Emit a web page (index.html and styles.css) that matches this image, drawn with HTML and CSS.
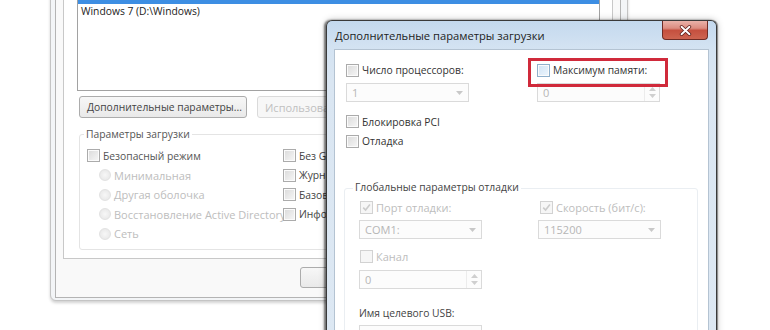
FILE: index.html
```html
<!DOCTYPE html>
<html lang="ru">
<head>
<meta charset="utf-8">
<title>Дополнительные параметры загрузки</title>
<link rel="stylesheet" href="styles.css">
</head>
<body>
<div class="desk">
  <div class="back">
    <div class="bclient">
      <div class="page">
        <div class="list">
          <div class="lrow sel"></div>
          <div class="lrow">Windows 7 (D:\Windows)</div>
        </div>
        <div class="btnrow">
          <button class="btn wide">Дополнительные параметры...</button>
          <button class="btn off">Использовать по умолчанию</button>
        </div>
        <div class="grp bgrp">
          <span class="gtitle">Параметры загрузки</span>
          <div class="bcols">
            <div class="bcol1">
              <div class="opt"><span class="cb"></span><span class="lt">Безопасный режим</span></div>
              <div class="opt sub dis"><span class="rb"></span><span>Минимальная</span></div>
              <div class="opt sub dis"><span class="rb"></span><span>Другая оболочка</span></div>
              <div class="opt sub dis"><span class="rb"></span><span>Восстановление Active Directory</span></div>
              <div class="opt sub dis"><span class="rb"></span><span>Сеть</span></div>
            </div>
            <div class="bcol2">
              <div class="opt"><span class="cb"></span><span class="dk">Без GUI</span></div>
              <div class="opt"><span class="cb"></span><span class="dk">Журнал загрузки</span></div>
              <div class="opt"><span class="cb"></span><span class="dk">Базовое видео</span></div>
              <div class="opt"><span class="cb"></span><span class="dk">Информация об ОС</span></div>
            </div>
          </div>
        </div>
      </div>
      <div class="foot">
        <button class="btn fb">OK</button>
        <button class="btn fb">Отмена</button>
        <button class="btn fb">Применить</button>
        <button class="btn fb">Справка</button>
      </div>
    </div>
  </div>

  <div class="dlg">
    <div class="tbar">
      <span class="ttext">Дополнительные параметры загрузки</span>
      <div class="close">
        <svg width="13" height="11" viewBox="0 0 13 11"><path d="M2.5 1.8 L10.5 9.2 M10.5 1.8 L2.5 9.2" stroke="#5a1d18" stroke-width="3.4" stroke-linecap="round"/><path d="M2.5 1.8 L10.5 9.2 M10.5 1.8 L2.5 9.2" stroke="#ffffff" stroke-width="1.9" stroke-linecap="round"/></svg>
      </div>
    </div>
    <div class="dclient">
      <div class="dtop">
        <div class="opt drow"><span class="cb"></span><span class="en">Число процессоров:</span></div>
        <div class="opt drow hl"><span class="cb hov"></span><span class="en">Максимум памяти:</span></div>
        <div class="fld">1<span class="arr"><svg width="7" height="4" viewBox="0 0 7 4"><path d="M0 0H7L3.5 4Z" fill="#c8c8c8"/></svg></span></div>
        <div class="fld">0<span class="spin"><svg width="7" height="4" viewBox="0 0 7 4"><path d="M0 4H7L3.5 0Z" fill="#cfcfcf"/></svg><svg width="7" height="4" viewBox="0 0 7 4"><path d="M0 0H7L3.5 4Z" fill="#cfcfcf"/></svg></span></div>
      </div>
      <div class="dchecks">
        <div class="opt drow"><span class="cb"></span><span class="en">Блокировка PCI</span></div>
        <div class="opt drow"><span class="cb"></span><span class="en">Отладка</span></div>
      </div>
      <div class="grp dgrp">
        <span class="gtitle dgt">Глобальные параметры отладки</span>
        <div class="ggrid">
          <div class="opt drow2 dis"><span class="cb off chk"><svg width="9" height="9" viewBox="0 0 9 9"><path d="M1.2 4.6 L3.6 7 L7.9 1.6" fill="none" stroke="#cbcbcb" stroke-width="1.6"/></svg></span><span>Порт отладки:</span></div>
          <div class="opt drow2 dis c2"><span class="cb off chk"><svg width="9" height="9" viewBox="0 0 9 9"><path d="M1.2 4.6 L3.6 7 L7.9 1.6" fill="none" stroke="#cbcbcb" stroke-width="1.6"/></svg></span><span>Скорость (бит/с):</span></div>
          <div class="fld f2">COM1:<span class="arr"><svg width="7" height="4" viewBox="0 0 7 4"><path d="M0 0H7L3.5 4Z" fill="#c8c8c8"/></svg></span></div>
          <div class="fld f2">115200<span class="arr"><svg width="7" height="4" viewBox="0 0 7 4"><path d="M0 0H7L3.5 4Z" fill="#c8c8c8"/></svg></span></div>
        </div>
        <div class="opt drow2 dis kanal"><span class="cb off"></span><span>Канал</span></div>
        <div class="fld f3">0<span class="spin"><svg width="7" height="4" viewBox="0 0 7 4"><path d="M0 4H7L3.5 0Z" fill="#cfcfcf"/></svg><svg width="7" height="4" viewBox="0 0 7 4"><path d="M0 0H7L3.5 4Z" fill="#cfcfcf"/></svg></span></div>
        <div class="usb">Имя целевого USB:</div>
        <div class="fld f4"></div>
      </div>
    </div>
  </div>
</div>
</body>
</html>
```

FILE: styles.css
```css
* { box-sizing: border-box; }
html, body { margin: 0; padding: 0; }
body {
  width: 770px; height: 330px; overflow: hidden; background: #fff;
  font-family: "Open Sans", "Noto Sans", "DejaVu Sans", sans-serif;
  font-size: 10.3px; color: #333;
}
.desk { position: relative; width: 770px; height: 330px; overflow: hidden; background: #fff; }

/* ---------- back window (msconfig) ---------- */
.back {
  position: absolute; left: 50px; top: -40px; width: 578px; height: 341px;
  border: 1px solid #c4c4c4; border-radius: 0 0 6px 6px;
  background: #f3f5f7; padding: 0 6px 2px 4px;
  box-shadow: 0 2px 3px rgba(0,0,0,.18);
  display: flex;
}
.bclient {
  flex: 1; border: 1px solid #b4b4b4; border-top: none; background: #f9f9f9;
  padding: 0 7px; display: flex; flex-direction: column;
}
.page {
  border: 1px solid #c8c8c8; border-top: none; background: #fff;
  padding: 26px 12px 8px 13px;
}
.list {
  height: 104px; border: 1px solid #a2a2a2; background: #fff; padding-top: 1px;
}
.lrow { height: 15px; line-height: 15px; padding-left: 3px; color: #222; white-space: nowrap; overflow: hidden; }
.lrow.sel { background: #3d8ee3; }

.btnrow { display: flex; gap: 10px; margin-top: 5px; padding-left: 2px; }
.btn {
  height: 22px; border: 1px solid #acacac; border-radius: 3px;
  background: linear-gradient(#f7f7f7, #e9e9e9);
  font: inherit; color: #444; padding: 0 7px; white-space: nowrap;
}
.btn.wide { width: 168px; }
.btn.off { border-color: #dadada; background: #f7f7f7; color: #c0c0c0; font-size: 11px; }

.grp { border: 1px solid #e4e4e4; border-radius: 3px; }
.gtitle {
  display: block; width: fit-content; background: #fff; padding: 0 2px;
  line-height: 15px; color: #555;
}
.bgrp { margin: 16px 0 0 2px; height: 116px; padding: 0 7px; }
.bgrp .gtitle { margin: -8px 0 0 -3px; }
.bcols { display: flex; margin-top: 4px; }
.bcol1 { width: 196px; }
.opt { display: flex; align-items: center; gap: 3px; height: 19.5px; white-space: nowrap; }
.opt.sub { padding-left: 12px; }
.lt { color: #555; }
.dk { color: #444; }
.dis { color: #bdbdbd; font-size: 11px; }

.cb {
  width: 13px; height: 13px; flex: none; border: 1px solid #ababab;
  background: linear-gradient(135deg, #dadada, #f7f7f7);
  box-shadow: inset 0 0 0 1px #fbfbfb;
  display: flex; align-items: center; justify-content: center;
}
.cb.hov { border-color: #8fb0cc; background: linear-gradient(135deg, #cfe3f5, #eef6fd); }
.cb.off { border-color: #d2d2d2; background: #f6f6f6; box-shadow: none; }
.rb {
  width: 12px; height: 12px; flex: none; border-radius: 50%;
  border: 1px solid #e2e2e2; background: radial-gradient(#f7f7f7, #e4e4e4);
}

.foot { height: 37px; display: flex; justify-content: flex-end; gap: 7px; padding-top: 8px; }
.btn.fb { width: 73px; height: 21px; }

/* ---------- front dialog ---------- */
.dlg {
  position: absolute; left: 326px; top: 20px; width: 391px; height: 330px;
  border: 1px solid #3a3a3a; border-bottom: none; border-radius: 6px 6px 0 0;
  background: linear-gradient(180deg, #c4d9ee 0, #d4e3f2 28px, #dae6f2 60px, #dde8f3);
  padding: 0 7px;
  box-shadow: -2px 0 2px rgba(0,0,0,.5), 1px 0 1px rgba(0,0,0,.4), 0 0 7px rgba(0,0,0,.25);
  display: flex; flex-direction: column;
}
.tbar { height: 28px; flex: none; display: flex; align-items: center; justify-content: space-between; padding-left: 1px; }
.ttext { font-size: 11.2px; color: #1e1e1e; }
.close {
  align-self: flex-start; width: 46px; height: 19px; margin-right: 1px;
  border: 1px solid #6e2c25; border-top: none; border-radius: 0 0 4px 4px;
  background: linear-gradient(#eab2a9 0, #dc8c80 40%, #c5503f 52%, #cd6450 100%);
  display: flex; align-items: center; justify-content: center;
}
.dclient {
  flex: 1; border: 1px solid #b4c3d2; border-bottom: none; background: #fff;
  padding: 10px 10px 0 9px;
}
.dtop { display: grid; grid-template-columns: 191px 124px; row-gap: 3px; margin-left: 2px; }
.drow { height: 20px; }
.en { color: #333; }
.hl { position: relative; }
.hl::after {
  content: ""; position: absolute; left: -9px; top: -2px; width: 134px; height: 23px;
  border: 3px solid #d02a3b;
}
.fld {
  width: 123px; height: 19px; border: 1px solid #dadada; background: #fcfcfc;
  color: #b6b6b6; font-size: 11px; display: flex; align-items: center; padding-left: 5px;
}
.arr { margin-left: auto; width: 18px; display: flex; justify-content: center; }
.spin {
  margin-left: auto; width: 15px; height: 100%; border-left: 1px solid #ececec;
  display: flex; flex-direction: column; align-items: center; justify-content: center; gap: 3px;
}
.dchecks { margin: 10px 0 0 2px; }
.dchecks .opt { height: 19.5px; }

.dgrp { margin-top: 37px; height: 200px; padding-left: 14px; border-color: #eaeef2; }
.dgt { margin: -9px 0 0 -6px; color: #444; }
.ggrid { display: grid; grid-template-columns: 179px 124px; row-gap: 3px; margin-top: 3px; }
.drow2 { height: 19px; padding-left: 1px; }
.drow2.c2 { padding-left: 2px; }
.kanal { margin-top: 8px; }
.f3 { margin-top: 4px; }
.usb { margin-top: 16px; line-height: 16px; color: #444; }
.f4 { margin-top: 4px; }
```
